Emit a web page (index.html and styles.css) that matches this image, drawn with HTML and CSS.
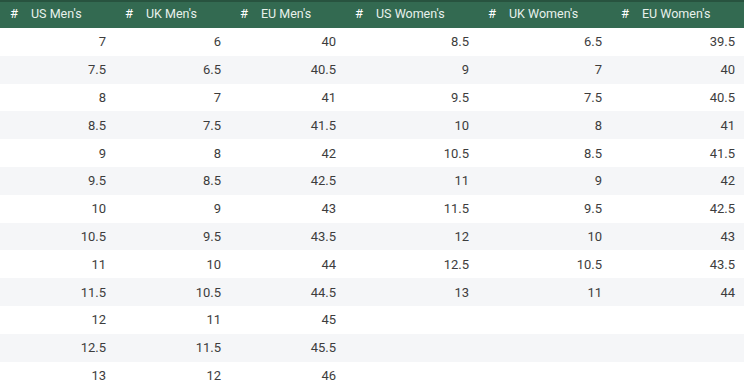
FILE: index.html
```html
<!DOCTYPE html>
<html lang="en">
  <head>
    <meta charset="utf-8">
    <title>Shoe sizes</title>
    <link rel="stylesheet" href="styles.css">
  </head>
  <body>
    <table class="sizes">
      <colgroup>
        <col class="men"><col class="men"><col class="men">
        <col class="women"><col class="women"><col class="women">
      </colgroup>
      <thead>
        <tr>
          <th><span class="hash">#</span>US Men's</th>
          <th><span class="hash">#</span>UK Men's</th>
          <th><span class="hash">#</span>EU Men's</th>
          <th><span class="hash">#</span>US Women's</th>
          <th><span class="hash">#</span>UK Women's</th>
          <th><span class="hash">#</span>EU Women's</th>
        </tr>
      </thead>
      <tbody>
        <tr><td>7</td><td>6</td><td>40</td><td>8.5</td><td>6.5</td><td>39.5</td></tr>
        <tr><td>7.5</td><td>6.5</td><td>40.5</td><td>9</td><td>7</td><td>40</td></tr>
        <tr><td>8</td><td>7</td><td>41</td><td>9.5</td><td>7.5</td><td>40.5</td></tr>
        <tr><td>8.5</td><td>7.5</td><td>41.5</td><td>10</td><td>8</td><td>41</td></tr>
        <tr><td>9</td><td>8</td><td>42</td><td>10.5</td><td>8.5</td><td>41.5</td></tr>
        <tr><td>9.5</td><td>8.5</td><td>42.5</td><td>11</td><td>9</td><td>42</td></tr>
        <tr><td>10</td><td>9</td><td>43</td><td>11.5</td><td>9.5</td><td>42.5</td></tr>
        <tr><td>10.5</td><td>9.5</td><td>43.5</td><td>12</td><td>10</td><td>43</td></tr>
        <tr><td>11</td><td>10</td><td>44</td><td>12.5</td><td>10.5</td><td>43.5</td></tr>
        <tr><td>11.5</td><td>10.5</td><td>44.5</td><td>13</td><td>11</td><td>44</td></tr>
        <tr><td>12</td><td>11</td><td>45</td><td></td><td></td><td></td></tr>
        <tr><td>12.5</td><td>11.5</td><td>45.5</td><td></td><td></td><td></td></tr>
        <tr><td>13</td><td>12</td><td>46</td><td></td><td></td><td></td></tr>
      </tbody>
    </table>
  </body>
</html>
```

FILE: styles.css
```css
* {
  box-sizing: border-box
}

body {
  margin: 0;
  padding: 0;
  background: #fff;
  font-family: Roboto, 'Liberation Sans', sans-serif;
  font-size: 13px;
  color: #3d3d3d
}

.sizes {
  width: 744px;
  table-layout: fixed;
  border-collapse: collapse;
  border-spacing: 0
}

.sizes col.men {
  width: 115px
}

.sizes col.women {
  width: 133px
}

.sizes thead tr {
  background: #336a51;
  border-top: 2px solid #28533f
}

.sizes th {
  height: 27px;
  padding: 0 0 3px 10px;
  text-align: left;
  font-size: 12.5px;
  font-weight: 400;
  color: #e8f1ec;
  white-space: nowrap
}

.sizes th .hash {
  display: inline-block;
  width: 21px;
  font-size: 13px;
  color: #fff
}

.sizes td {
  height: 27.8px;
  padding: 0 9px 0 0;
  text-align: right
}

.sizes tbody tr:nth-child(even) {
  background: #f5f6f8
}
```
